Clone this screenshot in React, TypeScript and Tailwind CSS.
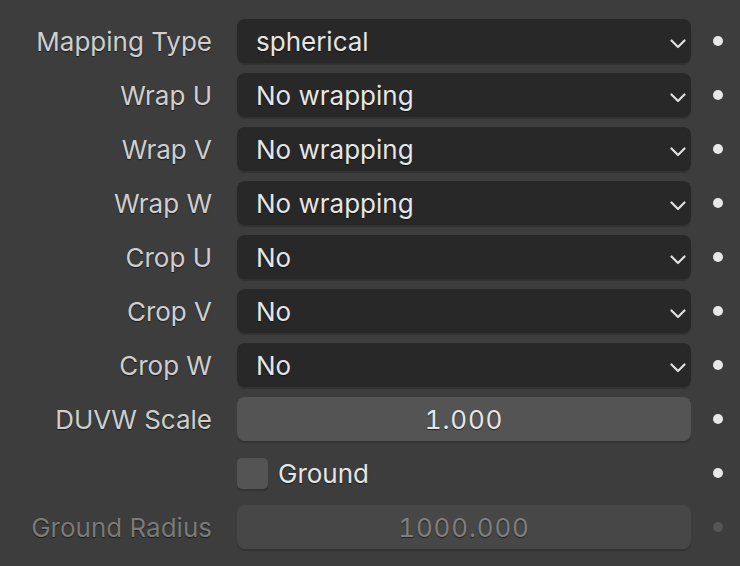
import { ReactNode } from 'react'

type Row =
  | { kind: 'enum'; label: string; value: string }
  | { kind: 'number'; label: string; value: string; disabled?: boolean }
  | { kind: 'check'; label: string }

const rows: Row[] = [
  { kind: 'enum', label: 'Mapping Type', value: 'spherical' },
  { kind: 'enum', label: 'Wrap U', value: 'No wrapping' },
  { kind: 'enum', label: 'Wrap V', value: 'No wrapping' },
  { kind: 'enum', label: 'Wrap W', value: 'No wrapping' },
  { kind: 'enum', label: 'Crop U', value: 'No' },
  { kind: 'enum', label: 'Crop V', value: 'No' },
  { kind: 'enum', label: 'Crop W', value: 'No' },
  { kind: 'number', label: 'DUVW Scale', value: '1.000' },
  { kind: 'check', label: 'Ground' },
  { kind: 'number', label: 'Ground Radius', value: '1000.000', disabled: true },
]

const Chevron = () => (
  <svg className="mt-[6px]" width="16" height="10" viewBox="0 0 16 10" fill="none">
    <path d="M1.5 1.5 L8 8 L14.5 1.5" stroke="#e0e0e0" strokeWidth="2.2" strokeLinecap="round" strokeLinejoin="round" />
  </svg>
)

const shadowText = '[text-shadow:0_1px_1px_rgba(0,0,0,0.55)]'

const Field = ({ row }: { row: Row }): ReactNode => {
  if (row.kind === 'enum') {
    return (
      <div className="flex h-[44px] w-[454px] items-center justify-between rounded-[8px] bg-[#282828] pl-[19px] pr-[5px] shadow-[0_2px_1px_rgba(0,0,0,0.18)]">
        <span className={`text-[#e6e6e6] ${shadowText}`}>{row.value}</span>
        <Chevron />
      </div>
    )
  }
  if (row.kind === 'number') {
    return (
      <div
        className={`flex h-[44px] w-[454px] items-center justify-center rounded-[8px] shadow-[0_2px_1px_rgba(0,0,0,0.18)] ${
          row.disabled ? 'bg-[#474747] text-[#7f7f7f]' : 'bg-[#545454] text-[#e6e6e6]'
        }`}
      >
        <span className={`tabular-nums tracking-[0.8px] ${shadowText}`}>{row.value}</span>
      </div>
    )
  }
  return (
    <div className="flex h-[44px] w-[454px] items-center gap-[10px]">
      <div className="h-[31px] w-[31px] rounded-[5px] bg-[#545454] shadow-[0_2px_1px_rgba(0,0,0,0.18)]" />
      <span className={`text-[#e6e6e6] ${shadowText}`}>{row.label}</span>
    </div>
  )
}

export default function App() {
  return (
    <div className="h-[566px] w-[740px] overflow-hidden bg-[#3d3d3d] pt-[19px] font-['Inter',sans-serif] text-[26px]">
      <div className="flex flex-col gap-[10px]">
        {rows.map((row, i) => {
          const disabled = row.kind === 'number' && row.disabled
          return (
            <div key={i} className="flex h-[44px] items-center">
              <div
                className={`w-[212px] text-right ${shadowText} ${
                  disabled ? 'text-[#7a7a7a]' : 'text-[#cfcfcf]'
                }`}
              >
                {row.kind === 'check' ? '' : row.label}
              </div>
              <div className="ml-[25px]">
                <Field row={row} />
              </div>
              <div
                className={`ml-[22px] h-[10px] w-[10px] rounded-full ${
                  disabled ? 'bg-[#555555]' : 'bg-[#e8e8e8]'
                }`}
              />
            </div>
          )
        })}
      </div>
    </div>
  )
}
